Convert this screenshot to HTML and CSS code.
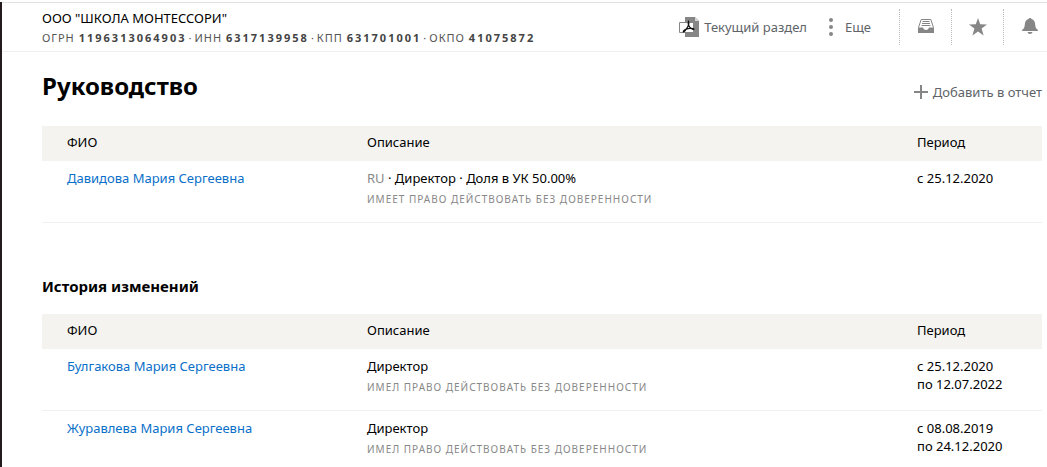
FILE: index.html
```html
<!DOCTYPE html>
<html lang="ru">
<head>
    <meta charset="UTF-8">
    <meta name="viewport" content="width=device-width, initial-scale=1.0">
    <title>Руководство</title>
    <link rel="stylesheet" href="styles.css">
</head>
<body>
    <div class="page">
        <header class="header">
            <div class="company">
                <div class="company-name">ООО "ШКОЛА МОНТЕССОРИ"</div>
                <div class="codes">ОГРН <b>1196313064903</b><span class="dot">·</span>ИНН <b>6317139958</b><span class="dot">·</span>КПП <b>631701001</b><span class="dot">·</span>ОКПО <b>41075872</b></div>
            </div>
            <div class="tools">
                <button type="button" class="tool">
                    <svg width="20" height="20" viewBox="0 0 20 20">
                        <path d="M6 0h10l4 4v16H6z" fill="#868686"/>
                        <path d="M16 0v4h4z" fill="#d4d4d4"/>
                        <path d="M.5 5.500h14v10H.5z" fill="#fff" stroke="#868686"/>
                        <path d="M9.500 4.500c1 2-1 6-2.500 8-1 1.500-2 2.800-2.700 2.300-.6-1.300 2.200-2.700 4.700-3.200 2.500-.5 6-.6 6 .4s-2.700.2-4-1.500C9.200 8.200 8.800 6 9.500 4.500z" fill="none" stroke="#111" stroke-width="1.200"/>
                    </svg>
                    Текущий раздел
                </button>
                <button type="button" class="tool more">
                    <svg width="4" height="18" viewBox="0 0 4 18" fill="#868686">
                        <circle cx="2" cy="2" r="2"/>
                        <circle cx="2" cy="9" r="2"/>
                        <circle cx="2" cy="16" r="2"/>
                    </svg>
                    Еще
                </button>
                <button type="button" class="icon-button" aria-label="Архив">
                    <svg width="18" height="18" viewBox="0 0 18 18">
                        <path d="M1.500 9.500 4.200 1.500h9.600l2.700 8" fill="none" stroke="#868686"/>
                        <path d="M5.500 3.500h7M5 5.500h8M4.500 7.500h9" stroke="#868686"/>
                        <path d="M1 9.500h4.500c.7 0 .8.500 1 1.100.3.900 1 1.400 2.500 1.400s2.200-.5 2.500-1.400c.2-.6.300-1.100 1-1.100H17V15H1z" fill="#868686"/>
                    </svg>
                </button>
                <button type="button" class="icon-button" aria-label="Избранное">
                    <svg width="18" height="18" viewBox="0 0 18 18">
                        <path d="M9 0l2.200 6.300 6.800.2-5.400 4.100 2 6.900L9 13.500l-5.600 4 2-6.900L0 6.500l6.800-.2z" fill="#868686"/>
                    </svg>
                </button>
                <button type="button" class="icon-button last" aria-label="Уведомления">
                    <svg width="18" height="18" viewBox="0 0 18 18">
                        <path d="M9 0c.8 0 1.300.5 1.500 1.100C13 1.800 14 3.800 14.200 6.500c.2 3 .8 4.100 2.600 5.300.4.300.2 1.200-.4 1.200H1.600c-.6 0-.8-.9-.4-1.200C3 10.600 3.600 9.500 3.800 6.500 4 3.800 5 1.800 7.500 1.100 7.700.5 8.200 0 9 0zM6.500 14h5c-.3 1.300-1.200 2-2.500 2s-2.200-.7-2.500-2z" fill="#868686"/>
                    </svg>
                </button>
            </div>
        </header>

        <main class="content">
            <div class="title-row">
                <h1>Руководство</h1>
                <button type="button" class="tool add">
                    <svg width="14" height="14" viewBox="0 0 14 14">
                        <path d="M7 0v14M0 7h14" stroke="#868686" stroke-width="2"/>
                    </svg>
                    Добавить в отчет
                </button>
            </div>
            <table>
                <thead>
                    <tr><th class="name">ФИО</th><th>Описание</th><th class="period">Период</th></tr>
                </thead>
                <tbody>
                    <tr>
                        <td><a href="#">Давидова Мария Сергеевна</a></td>
                        <td><span class="country">RU</span> · Директор · Доля в УК 50.00%<div class="note">Имеет право действовать без доверенности</div></td>
                        <td>с 25.12.2020</td>
                    </tr>
                </tbody>
            </table>

            <h2>История изменений</h2>
            <table>
                <thead>
                    <tr><th class="name">ФИО</th><th>Описание</th><th class="period">Период</th></tr>
                </thead>
                <tbody>
                    <tr>
                        <td><a href="#">Булгакова Мария Сергеевна</a></td>
                        <td>Директор<div class="note">Имел право действовать без доверенности</div></td>
                        <td>с 25.12.2020<br>по 12.07.2022</td>
                    </tr>
                    <tr>
                        <td><a href="#">Журавлева Мария Сергеевна</a></td>
                        <td>Директор<div class="note">Имел право действовать без доверенности</div></td>
                        <td>с 08.08.2019<br>по 24.12.2020</td>
                    </tr>
                </tbody>
            </table>
        </main>
    </div>
</body>
</html>
```
FILE: styles.css
```css
* {
    box-sizing: border-box;
}
html {
    overflow: hidden;
}
body {
    margin: 0;
    padding-top: 2px;
    font-family: "Noto Sans", "Open Sans", sans-serif;
    font-size: 13px;
    line-height: 18px;
    color: #000;
    background-color: #fff;
}
.page {
    min-height: 100vh;
    border-left: 2px solid #231a1d;
}
.header {
    display: flex;
    justify-content: space-between;
    height: 50px;
    padding-left: 40px;
    border-top: 1px solid #e2e2e2;
    border-bottom: 1px solid #efefef;
}
.company {
    padding-top: 6px;
    white-space: nowrap;
}
.codes {
    margin-top: 2px;
    font-size: 11px;
    letter-spacing: 1px;
    color: #555;
}
.codes b {
    letter-spacing: 2px;
    color: #444;
}
.dot {
    margin: 0 2px;
}
.tools {
    display: flex;
    align-items: center;
}
button {
    padding: 0;
    border: 0;
    background: none;
    font-family: inherit;
    cursor: pointer;
}
.tool {
    display: flex;
    align-items: center;
    gap: 5px;
    font-size: 13px;
    line-height: 18px;
    color: #606468;
    white-space: nowrap;
}
.more {
    gap: 12px;
    margin: 0 28px 0 22px;
}
.icon-button {
    display: flex;
    align-items: center;
    height: 36px;
    padding: 0 16px 0 17px;
    border-left: 1px dotted #b8b8b8;
}
.last {
    padding-right: 8px;
}
.content {
    padding: 0 5px 0 40px;
}
.title-row {
    display: flex;
    justify-content: space-between;
    align-items: center;
    height: 74px;
    padding-bottom: 6px;
}
h1 {
    margin: 0;
    font-size: 24px;
    line-height: 32px;
}
.add {
    margin-top: 12px;
}
h2 {
    margin: 51px 0 16px;
    font-size: 15px;
    line-height: 24px;
}
table {
    width: 100%;
    table-layout: fixed;
    border-spacing: 0;
}
th {
    height: 35px;
    padding: 0 0 3px;
    background-color: #f4f3f0;
    font-weight: normal;
    text-align: left;
}
th.name {
    width: 325px;
}
th.period {
    width: 125px;
}
th:first-child,
td:first-child {
    padding-left: 25px;
}
td {
    height: 62px;
    padding: 8px 0 0;
    border-bottom: 1px solid #f0f0f0;
    vertical-align: top;
}
a {
    color: #0a6fc9;
    text-decoration: none;
}
.country {
    color: #888;
}
.note {
    margin-top: 3px;
    font-size: 10px;
    letter-spacing: 1px;
    text-transform: uppercase;
    color: #888;
}
```
